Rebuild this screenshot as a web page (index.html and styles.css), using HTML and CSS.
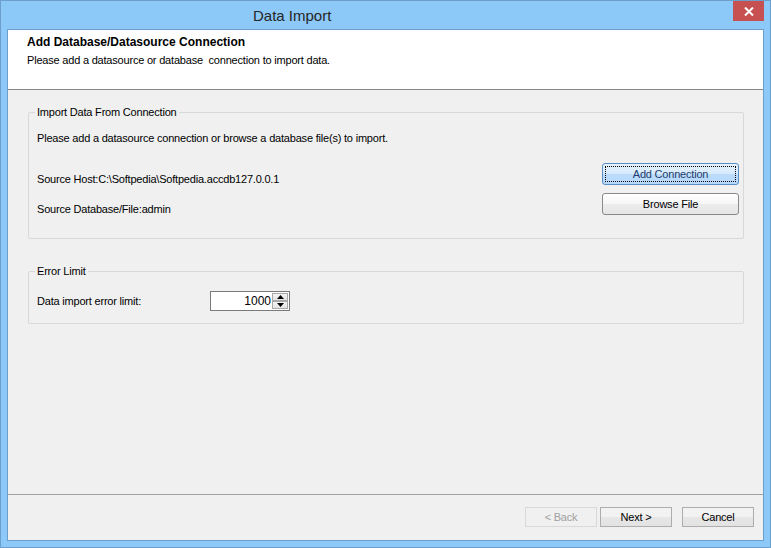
FILE: index.html
```html
<!DOCTYPE html>
<html lang="en">
<head>
    <meta charset="UTF-8">
    <title>Data Import</title>
    <link rel="stylesheet" href="styles.css">
</head>
<body>

<div class="window">
    <div class="titlebar">
        <div class="title">Data Import</div>
        <div class="close_btn">
            <svg width="10" height="9" viewBox="0 0 10 9">
                <path d="M1 0.5 L9 8.5 M9 0.5 L1 8.5" stroke="#ffffff" stroke-width="2"/>
            </svg>
        </div>
    </div>

    <div class="client">
        <div class="header">
            <div class="header_title">Add Database/Datasource Connection</div>
            <div class="header_sub">Please add a datasource or database&nbsp; connection to import data.</div>
        </div>

        <div class="main">
            <fieldset class="group group_connection">
                <legend>Import Data From Connection</legend>
                <div class="intro">Please add a datasource connection or browse a database file(s) to import.</div>
                <div class="source_row">
                    <div class="source_labels">
                        <div class="source_host">Source Host:C:\Softpedia\Softpedia.accdb127.0.0.1</div>
                        <div class="source_db">Source Database/File:admin</div>
                    </div>
                    <div class="source_buttons">
                        <button class="btn btn_wide btn_focus"><span>Add Connection</span></button>
                        <button class="btn btn_wide">Browse File</button>
                    </div>
                </div>
            </fieldset>

            <fieldset class="group group_limit">
                <legend>Error Limit</legend>
                <div class="limit_row">
                    <div class="limit_label">Data import error limit:</div>
                    <div class="spinner">
                        <div class="spinner_value">1000</div>
                        <div class="spinner_arrows">
                            <div class="arrow">
                                <svg width="7" height="4" viewBox="0 0 7 4"><path d="M3.5 0 L7 4 L0 4 Z" fill="#000"/></svg>
                            </div>
                            <div class="arrow">
                                <svg width="7" height="4" viewBox="0 0 7 4"><path d="M0 0 L7 0 L3.5 4 Z" fill="#000"/></svg>
                            </div>
                        </div>
                    </div>
                </div>
            </fieldset>
        </div>

        <div class="footer">
            <button class="btn btn_nav" disabled>&lt; Back</button>
            <button class="btn btn_nav">Next &gt;</button>
            <button class="btn btn_nav btn_cancel">Cancel</button>
        </div>
    </div>
</div>

</body>
</html>
```

FILE: styles.css
```css
body {
    margin: 0;
    font-family: "Liberation Sans", Arial, sans-serif;
    font-size: 11px;
    color: #000000;
}

.window {
    width: 771px;
    height: 548px;
    box-sizing: border-box;
    background: #8cc8f8;
    border: 1px solid #6d9fcc;
    padding: 0 6px 6px 6px;
    display: flex;
    flex-direction: column;
}

.titlebar {
    height: 28px;
    display: flex;
    align-items: flex-start;
}

.title {
    margin-left: 246px;
    margin-top: 6px;
    font-size: 15px;
    line-height: 18px;
    color: #262626;
    flex: 1;
}

.close_btn {
    width: 31px;
    height: 20px;
    background: #c75050;
    display: flex;
    align-items: center;
    justify-content: center;
}

.client {
    flex: 1;
    border: 1px solid #6d9fcc;
    background: #f0f0f0;
    display: flex;
    flex-direction: column;
    letter-spacing: -0.2px;
}

.header {
    height: 60px;
    background: #ffffff;
    border-bottom: 1px solid #888888;
    padding: 6px 0 0 19px;
    box-sizing: border-box;
}

.header_title {
    font-weight: bold;
    font-size: 12px;
    line-height: 13px;
    letter-spacing: 0;
}

.header_sub {
    margin-top: 5px;
    line-height: 13px;
}

.main {
    flex: 1;
}

/* group boxes */
.group {
    margin: 0 19px 0 20px;
    border: 1px solid #d8d8d8;
    border-radius: 2px;
    padding: 0 8px;
    min-width: 0;
}

.group legend {
    padding: 0 2px;
    margin-left: -2px;
    line-height: 13px;
}

.group_connection {
    margin-top: 16px;
    padding-top: 13px;
    padding-bottom: 22px;
}

.group_limit {
    margin-top: 26px;
    padding-top: 13px;
    padding-bottom: 12px;
}

.intro {
    line-height: 13px;
}

.source_row {
    margin-top: 18px;
    margin-right: -4px;
    display: flex;
    justify-content: space-between;
}

.source_labels {
    padding-top: 10px;
    line-height: 13px;
}

.source_db {
    margin-top: 17px;
}

.source_buttons {
    display: flex;
    flex-direction: column;
    gap: 8px;
}

/* buttons */
.btn {
    font-family: "Liberation Sans", Arial, sans-serif;
    font-size: 11px;
    letter-spacing: -0.2px;
    color: #000000;
    border: 1px solid #acacac;
    border-radius: 3px;
    background: linear-gradient(#f2f2f2, #f2f2f2 50%, #e6e6e6 50%, #e3e3e3);
    padding: 0;
    margin: 0;
}

.btn_wide {
    width: 137px;
    height: 22px;
    border-color: #8a8a8a;
    background: linear-gradient(#ffffff, #f6f6f6 50%, #ececec 50%, #e6e6e6);
}

.btn_focus {
    border-color: #5b8ec4;
    background: linear-gradient(#e6f2fd, #d6eafd 50%, #bcdcfc 50%, #b6d8fb);
    color: #223c6a;
    padding: 2px;
}

.btn_focus span {
    display: flex;
    align-items: center;
    justify-content: center;
    height: 100%;
    box-sizing: border-box;
    border: 1px dotted #000000;
}

.btn_nav {
    width: 72px;
    height: 20px;
    border-radius: 0;
    border-color: #adadad;
}

.btn_nav:disabled {
    color: #a0a0a0;
    border-color: #d9d9d9;
    background: #f0f0f0;
}

.btn_nav + .btn_nav {
    margin-left: 3px;
}

.btn_nav + .btn_cancel {
    margin-left: 10px;
}

/* error limit */
.limit_row {
    display: flex;
    align-items: center;
}

.limit_label {
    width: 173px;
    line-height: 13px;
}

.spinner {
    width: 80px;
    height: 20px;
    box-sizing: border-box;
    border: 1px solid #7a7a7a;
    background: #ffffff;
    display: flex;
}

.spinner_value {
    flex: 1;
    text-align: right;
    line-height: 18px;
    padding-right: 1px;
    font-size: 12px;
    letter-spacing: 0;
}

.spinner_arrows {
    width: 16px;
    display: flex;
    flex-direction: column;
    padding: 1px 1px 1px 0;
}

.arrow {
    flex: 1;
    border: 1px solid #a9a9a9;
    background: linear-gradient(#f4f4f4, #e4e4e4);
    display: flex;
    align-items: center;
    justify-content: center;
}

.footer {
    height: 46px;
    box-sizing: border-box;
    border-top: 1px solid #a0a0a0;
    padding: 12px 9px 0 0;
    display: flex;
    justify-content: flex-end;
    align-items: flex-start;
}
```
